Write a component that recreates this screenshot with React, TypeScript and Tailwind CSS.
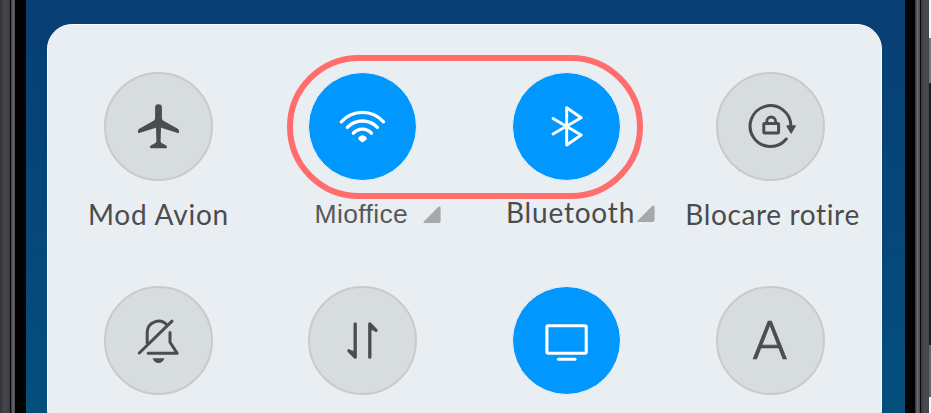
import type { ReactNode } from "react";

function Tile({ active = false, icon, children }: { active?: boolean; icon: ReactNode; children?: ReactNode }) {
  return (
    <div className="flex h-[214px] w-[204px] flex-col items-center">
      <div
        className={
          active
            ? "flex size-[109px] items-center justify-center rounded-full border border-[#f3f3f2] bg-[#0098ff] text-white"
            : "flex size-[109px] items-center justify-center rounded-full border-2 border-[#c8cbcd] bg-[#d7dcdf] text-[#4b4c4d]"
        }
      >
        {icon}
      </div>
      {children}
    </div>
  );
}

function Glyph({ children, width = 3.2 }: { children: ReactNode; width?: number }) {
  return (
    <svg
      viewBox="0 0 109 109"
      className="size-[109px] shrink-0"
      fill="none"
      stroke="currentColor"
      strokeWidth={width}
      strokeLinecap="round"
      strokeLinejoin="round"
    >
      {children}
    </svg>
  );
}

function Corner() {
  return (
    <svg viewBox="0 0 18 17" className="h-[17px] w-[18px] shrink-0">
      <path d="M1 15.3 15.2 1Q17.6-.5 17.6 2V15Q17.6 17 15.6 17H1.8Q-.4 17 1 15.3Z" fill="#a5a8ab" />
    </svg>
  );
}

export default function App() {
  return (
    <div className="relative flex h-[413px] w-[931px] overflow-hidden bg-black">
      <div className="w-[10px] shrink-0 bg-linear-to-r from-[#343337] via-[#48474c] to-[#3b3a3f]" />
      <div className="w-px shrink-0 bg-[#09090b]" />
      <div className="w-[4px] shrink-0 bg-linear-to-r from-[#343338] via-[#68676e] to-[#4b4a50]" />
      <div className="w-[11px] shrink-0 bg-[#030304]" />
      <main className="flex w-[879px] shrink-0 bg-linear-to-b from-[#083e73] to-[#044f7c] pt-[24px] pl-[21px]">
        <section className="h-[410px] w-[835px] rounded-[25px] border border-[#fbfdff] bg-[#e9eef3] pt-[47px] pl-[8px]">
          <div className="grid w-[816px] grid-cols-[204px_204px_204px_204px]">
            <Tile
              icon={
                <Glyph>
                  <path
                    d="M51.1 35.3Q51.1 32.2 54.5 32.2T57.9 35.3V46.5Q58 48 59.5 48.8L73.7 56.8Q75 57.6 75 59V60.2Q75 61.4 73.8 61L57 55.7 56.6 69.2Q56.7 70.5 58 71.2L61.8 73.3Q63 74 63 75.2 63 76.3 62 76.3H47Q46 76.3 46 75.2 46 74 47.2 73.3L51 71.2Q52.3 70.5 52.4 69.2L52 55.7 35.2 61Q34 61.4 34 60.2V59Q34 57.6 35.3 56.8L49.5 48.8Q51 48 51.1 46.5Z"
                    fill="currentColor"
                    stroke="none"
                  />
                </Glyph>
              }
            >
              <span className="mt-[15px] ml-px whitespace-nowrap font-['Lato',sans-serif] text-[28px] leading-[36px] tracking-[0.8px] text-[#4b4c4d]">
                Mod Avion
              </span>
            </Tile>
            <Tile
              active
              icon={
                <Glyph width={3.3}>
                  <path d="M33.3 49.8A28.2 28.2 0 0 1 75.5 49.8M39.4 55.3A21 21 0 0 1 69.4 55.3M45.4 61.2A12 12 0 0 1 63.4 61.2" />
                  <path
                    d="M50.3 66Q51.5 63.3 54.5 63.3T58.7 66Q59 67 58.2 67.8L55.4 70Q54.5 70.7 53.6 70L50.8 67.8Q50 67 50.3 66Z"
                    fill="currentColor"
                    stroke="none"
                  />
                </Glyph>
              }
            >
              <div className="mt-[15px] ml-[31px] flex w-[126px] items-center justify-between">
                <span className="whitespace-nowrap font-['Liberation_Sans',sans-serif] text-[26.5px] leading-[36px] tracking-[0.35px] text-[#57595b]">
                  Mioffice
                </span>
                <Corner />
              </div>
            </Tile>
            <Tile
              active
              icon={
                <Glyph width={2.9}>
                  <path d="M41 46.5 69.2 63 54.7 73V35.7L69.2 45.8 41 62" />
                </Glyph>
              }
            >
              <div className="mt-[15px] ml-[29px] flex w-[149px] items-center justify-between">
                <span className="-mt-[2px] whitespace-nowrap font-['Lato',sans-serif] text-[28px] leading-[36px] tracking-[0.8px] text-[#4b4c4d]">
                  Bluetooth
                </span>
                <Corner />
              </div>
            </Tile>
            <Tile
              icon={
                <Glyph>
                  <path d="M70.3 67A20.4 20.4 0 1 1 74.9 54" strokeWidth="3" />
                  <path d="M71 54H79.2L75.1 61Z" fill="currentColor" strokeWidth="1.4" />
                  <rect x="47.8" y="51.5" width="14.8" height="9.6" rx=".8" strokeWidth="3" />
                  <path d="M50.8 51V49.4A4.4 4.4 0 0 1 59.6 49.4V51" strokeWidth="2.8" />
                </Glyph>
              }
            >
              <span className="mt-[15px] ml-[5px] whitespace-nowrap font-['Lato',sans-serif] text-[28px] leading-[36px] tracking-[0.65px] text-[#4b4c4d]">
                Blocare rotire
              </span>
            </Tile>
            <Tile
              icon={
                <Glyph width={3}>
                  <path d="M35.3 67 68 35.2M43.2 57V46.2A11.3 11.3 0 0 1 63.2 39.3M66 46.5V56.3L73.2 67.3H44.2" />
                  <path d="M48.6 72.2H60.4Q58.8 77 54.5 77T48.6 72.2Z" fill="currentColor" stroke="none" />
                </Glyph>
              }
            />
            <Tile
              icon={
                <Glyph width={3.3}>
                  <path d="M47.2 37.8V71.2L41 64.8M61.8 71.2V37.8L68 44.4" />
                  <path d="M47.2 65.8V71.2L41.2 64.8ZM61.8 43V37.8L68 44.4Z" fill="currentColor" strokeWidth="1" />
                </Glyph>
              }
            />
            <Tile
              active
              icon={
                <Glyph width={3.1}>
                  <rect x="34.9" y="39.7" width="39.3" height="27.6" rx="1.2" />
                  <path d="M46.5 73.3H63" />
                </Glyph>
              }
            />
            <Tile
              icon={
                <span className="scale-x-[1.04] font-['Roboto',sans-serif] text-[54px] leading-[54px] font-light [-webkit-text-stroke:0.7px_#4b4c4d]">
                  A
                </span>
              }
            />
          </div>
        </section>
      </main>
      <div className="w-[10px] shrink-0 bg-[#030304]" />
      <div className="w-[5px] shrink-0 bg-linear-to-r from-[#343338] via-[#68676e] to-[#4b4a50]" />
      <div className="w-px shrink-0 bg-[#09090b]" />
      <div className="w-[8px] shrink-0 bg-linear-to-r from-[#3b3a3f] via-[#4b4a50] to-[#454449]" />
      <div className="flex w-[2px] shrink-0 flex-col bg-[#f5f5f6]">
        <div className="mt-[38px] h-[45px] bg-[#77767a]" />
        <div className="h-[262px] bg-[#1b1b20]" />
        <div className="h-[52px] bg-[#66656a]" />
      </div>
      {/* Highlight ring over the two wireless toggles */}
      <div className="absolute top-[55px] left-[287px] h-[144px] w-[356px] rounded-full border-6 border-[#ff6d6d]" />
    </div>
  );
}
